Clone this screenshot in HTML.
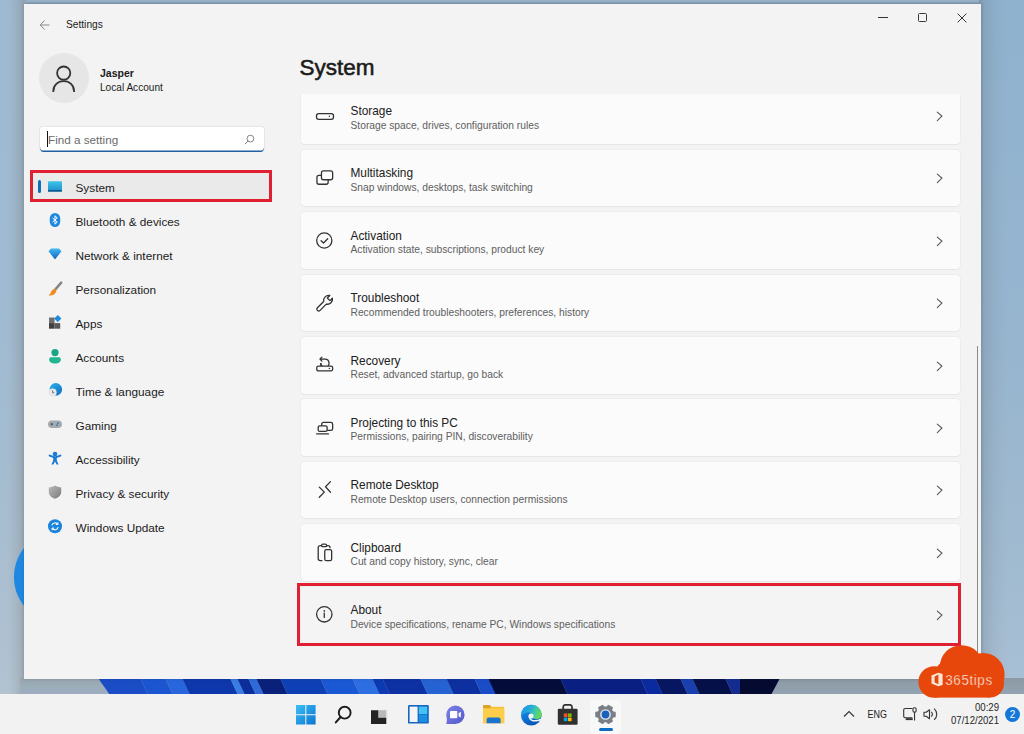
<!DOCTYPE html>
<html><head><meta charset="utf-8">
<style>
*{margin:0;padding:0;box-sizing:border-box}
html,body{width:1024px;height:734px;overflow:hidden;font-family:"Liberation Sans",sans-serif;background:#94b3cf}
.abs{position:absolute}
#desk{position:absolute;left:0;top:0;width:1024px;height:734px;background:linear-gradient(180deg,#7fa6c6 0%,#8eb0cc 50%,#a9bed2 100%)}
#win{position:absolute;left:24px;top:4px;width:957px;height:675px;background:#f3f3f3;overflow:hidden;box-shadow:0 0 3px rgba(40,60,80,0.25)}
.t{position:absolute;white-space:nowrap;color:#1b1b1b}
.nav{position:absolute;left:51.5px;font-size:11.8px;color:#1b1b1b;white-space:nowrap}
.card{position:absolute;left:277px;width:659px;height:56.5px;background:#fbfbfb;border-radius:4px;box-shadow:0 1px 0 #e6e6e6, 0 0 0 1px #ededed}
.ct{position:absolute;left:49.5px;top:16.5px;font-size:11.85px;color:#202020;white-space:nowrap}
.cs{position:absolute;left:49.5px;top:32px;font-size:10.25px;color:#606060;white-space:nowrap}
.chev{position:absolute;left:635px;top:23.5px}
.ic{position:absolute;left:14px;top:18.3px}
#task{position:absolute;left:0;top:694px;width:1024px;height:40px;background:#f2f2f2}
</style></head>
<body>
<div id="desk"></div>
<div class="abs" style="left:0;top:0;width:1024px;height:8px;background:linear-gradient(180deg,#97b2c8 0,#93aec4 2px,#7f95a6 4px,#8aa0b2 8px)"></div>
<div class="abs" style="left:0;top:0;width:26px;height:694px;background:linear-gradient(180deg,#9ebad2 0,#9fbad1 300px,#a7bdd0 520px,#b2c3d2 694px)"></div>
<div class="abs" style="left:0;top:0;width:26px;height:694px;background:linear-gradient(90deg,rgba(120,110,100,0) 0,rgba(120,110,100,0) 8px,rgba(120,115,110,0.12) 16px,rgba(120,115,110,0.3) 24px)"></div>
<div class="abs" style="left:979px;top:0;width:45px;height:694px;background:linear-gradient(180deg,#8fb2cf 0,#97b5cf 350px,#a0bad0 560px,#a9c0d5 694px)"></div>
<div class="abs" style="left:979px;top:0;width:45px;height:694px;background:linear-gradient(90deg,rgba(90,100,110,0.32) 0,rgba(100,110,120,0.2) 6px,rgba(110,115,120,0.08) 16px,rgba(110,115,120,0) 28px)"></div>
<div class="abs" style="left:14.4px;top:531.4px;width:91.2px;height:91.2px;border-radius:50%;background:#1f87e0"></div>
<!-- wallpaper strip -->
<svg class="abs" style="left:0;top:678px" width="1024" height="17" viewBox="0 0 1024 17">
<defs><linearGradient id="gstripL" x1="0" y1="0" x2="0" y2="1"><stop offset="0" stop-color="#98a4ad"/><stop offset="0.5" stop-color="#9aaeb9"/><stop offset="1" stop-color="#9fadc4"/></linearGradient><linearGradient id="gstripR" x1="0" y1="0" x2="0" y2="1"><stop offset="0" stop-color="#8d99a3"/><stop offset="1" stop-color="#94a4b4"/></linearGradient></defs><rect x="20" y="0" width="500" height="17" fill="url(#gstripL)"/><rect x="520" y="0" width="504" height="17" fill="url(#gstripR)"/>
<polygon points="98,0 140,0 148,17 110,17" fill="#1a4cc6"/>
<polygon points="140,0 165,0 173,17 148,17" fill="#1c55d0"/>
<polygon points="165,0 182,0 190,17 173,17" fill="#2766dc"/>
<polygon points="182,0 230,0 238,17 190,17" fill="#0d37aa"/>
<polygon points="230,0 237,0 245,17 238,17" fill="#3a7de4"/>
<polygon points="237,0 248,0 256,17 245,17" fill="#0b2e9c"/>
<polygon points="248,0 256,0 264,17 256,17" fill="#2f6ad8"/>
<polygon points="256,0 280,0 288,17 264,17" fill="#0a217c"/>
<polygon points="280,0 320,0 328,17 288,17" fill="#0f3fb4"/>
<polygon points="320,0 352,0 360,17 328,17" fill="#1a58d4"/>
<polygon points="352,0 372,0 380,17 360,17" fill="#2d6ee2"/>
<polygon points="372,0 382,0 390,17 380,17" fill="#0b39b2"/>
<polygon points="382,0 420,0 428,17 390,17" fill="#0d30a2"/>
<polygon points="420,0 446,0 454,17 428,17" fill="#2562d2"/>
<polygon points="446,0 474,0 482,17 454,17" fill="#0d30a0"/>
<polygon points="474,0 488,0 498,17 482,17" fill="#1a4cc8"/>
<polygon points="488,0 560,0 568,17 496,17" fill="#040c3a"/>
<polygon points="560,0 640,0 648,17 568,17" fill="#0a1f82"/>
<polygon points="640,0 655,0 663,17 648,17" fill="#0c2aa0"/>
<polygon points="655,0 680,0 688,17 663,17" fill="#061660"/>
<polygon points="680,0 692,0 700,17 688,17" fill="#1a40b0"/>
<polygon points="692,0 725,0 733,17 700,17" fill="#050f48"/>
<polygon points="725,0 740,0 748,17 733,17" fill="#142c90"/>
<polygon points="740,0 780,0 771,17 740,17" fill="#040a30"/>
</svg>
<div id="win">
  <!-- title bar -->
  <svg class="abs" style="left:14.5px;top:14.5px" width="12" height="12" viewBox="0 0 12 12"><path d="M10.5 6H1.5M5.6 1.4L1.2 6L5.6 10.6" fill="none" stroke="#8a8a8a" stroke-width="1"/></svg>
  <div class="t" style="left:42px;top:15px;font-size:10.2px;color:#1b1b1b">Settings</div>
  <!-- window controls -->
  <div class="abs" style="left:854px;top:12.5px;width:10px;height:1px;background:#333"></div>
  <div class="abs" style="left:893.8px;top:9px;width:9px;height:9px;border:1.2px solid #3a3a3a;border-radius:1.5px"></div>
  <svg class="abs" style="left:932.5px;top:8.5px" width="10" height="10" viewBox="0 0 10 10"><path d="M0.6 0.6L9.4 9.4M9.4 0.6L0.6 9.4" stroke="#333" stroke-width="1"/></svg>

  <!-- profile -->
  <div class="abs" style="left:14.5px;top:49px;width:50px;height:50px;border-radius:50%;background:#e6e6e6"></div>
  <svg class="abs" style="left:28px;top:60px" width="24" height="28" viewBox="0 0 24 28"><circle cx="11.7" cy="9.1" r="6.6" fill="none" stroke="#333" stroke-width="1.8"/><path d="M1.3 27.4C1.3 21 6 17.2 11.7 17.2S22.1 21 22.1 27.4" fill="none" stroke="#333" stroke-width="1.8" stroke-linecap="round"/></svg>
  <div class="t" style="left:76px;top:63.3px;font-size:10.5px;font-weight:700;color:#1b1b1b">Jasper</div>
  <div class="t" style="left:76px;top:78px;font-size:10.1px;color:#1b1b1b">Local Account</div>

  <!-- search -->
  <div class="abs" style="left:15px;top:121.5px;width:226px;height:26.5px;background:#fff;border-radius:4px;border:1px solid #e6e6e6;border-bottom:none;box-shadow:inset 0 -1.6px 0 #1d5f9f"></div>
  <div class="abs" style="left:23px;top:127px;width:1px;height:16px;background:#111"></div>
  <div class="t" style="left:24px;top:128.5px;font-size:11.7px;color:#6b6b6b">Find a setting</div>
  <svg class="abs" style="left:220px;top:129.5px" width="11" height="11" viewBox="0 0 11 11"><circle cx="6.4" cy="4.6" r="3.4" fill="none" stroke="#777" stroke-width="0.9"/><path d="M4 7.1L1.2 9.9" stroke="#777" stroke-width="1" stroke-linecap="round"/></svg>

  <!-- nav -->
  <div class="abs" style="left:8px;top:168px;width:238px;height:30px;background:#eaeaea;border-radius:4px"></div>
  <div class="abs" style="left:14px;top:176px;width:3px;height:13px;background:#0f6cbd;border-radius:2px"></div>
  <div class="abs" style="left:6px;top:166px;width:242px;height:31.5px;border:3px solid #e01f33"></div>


  <!-- nav icons -->
  <svg class="abs" style="left:23px;top:176px" width="16" height="14" viewBox="0 0 16 14"><defs><linearGradient id="gsys" x1="0" y1="0" x2="0" y2="1"><stop offset="0" stop-color="#3cc4e6"/><stop offset="1" stop-color="#1d8fcf"/></linearGradient></defs><rect x="1" y="1.2" width="14" height="10.2" rx="1" fill="url(#gsys)"/><rect x="1" y="10" width="14" height="1.6" fill="#10598c"/></svg>
  <svg class="abs" style="left:23px;top:208px" width="16" height="16" viewBox="0 0 16 16"><rect x="2.8" y="1" width="10.4" height="14" rx="5.2" fill="#1c86e3"/><path d="M5.5 5.9L10.3 10.1L8 12.2V3.8L10.3 5.9L5.5 10.1" fill="none" stroke="#fff" stroke-width="1" stroke-linejoin="round"/></svg>
  <svg class="abs" style="left:23px;top:243px" width="16" height="14" viewBox="0 0 16 14"><defs><linearGradient id="gnet" x1="0" y1="0" x2="0" y2="1"><stop offset="0" stop-color="#43b8f0"/><stop offset="1" stop-color="#0f62c0"/></linearGradient></defs><path d="M1.5 4.2L4 1.6H12L14.5 4.2L8 12.6Z" fill="url(#gnet)"/></svg>
  <svg class="abs" style="left:23px;top:277px" width="16" height="16" viewBox="0 0 16 16"><path d="M14.2 1.6L8.4 8.4" stroke="#858585" stroke-width="2.4" stroke-linecap="round"/><path d="M8.6 8.2C6.4 7.6 4.6 9.2 4 11.3C3.6 12.6 2.6 13.7 1.4 14.2C4 14.8 7.4 14 8.8 11.4C9.4 10.2 9.5 9 8.6 8.2Z" fill="#f08a1c"/></svg>
  <svg class="abs" style="left:23px;top:310px" width="16" height="16" viewBox="0 0 16 16"><rect x="2" y="3.5" width="5.6" height="5.6" fill="#6f6f6f"/><rect x="2" y="9.1" width="5.6" height="5.6" fill="#3f3f3f"/><rect x="7.6" y="9.1" width="5.6" height="5.6" fill="#5a5a5a"/><path d="M10.8 1L14.4 4.6L10.8 8.2L7.2 4.6Z" fill="#1d8be0"/></svg>
  <svg class="abs" style="left:23px;top:344px" width="16" height="16" viewBox="0 0 16 16"><circle cx="8" cy="4.6" r="3.6" fill="#17a585"/><path d="M2.2 11.4C2.2 9.8 3.2 9.2 4.6 9.2H11.4C12.8 9.2 13.8 9.8 13.8 11.4C13.8 14 11.2 15.4 8 15.4S2.2 14 2.2 11.4Z" fill="#1fb690"/></svg>
  <svg class="abs" style="left:23px;top:378px" width="16" height="16" viewBox="0 0 16 16"><defs><linearGradient id="gtime" x1="0" y1="0" x2="1" y2="1"><stop offset="0" stop-color="#2bb3e8"/><stop offset="1" stop-color="#136bc4"/></linearGradient></defs><circle cx="8.8" cy="7.4" r="6.3" fill="url(#gtime)"/><circle cx="5.6" cy="10.6" r="4" fill="#e8e8e8"/><path d="M5.6 8.4V10.8H7.2" fill="none" stroke="#555" stroke-width="0.8"/></svg>
  <svg class="abs" style="left:23px;top:412px" width="16" height="16" viewBox="0 0 16 16"><rect x="1" y="4.4" width="14" height="7.6" rx="3.8" fill="#a7a9ad"/><path d="M3.6 8.2h2.4M4.8 7v2.4" stroke="#4b4b4b" stroke-width="0.9"/><circle cx="11" cy="7.2" r="0.9" fill="#1d7fd6"/><circle cx="10" cy="9.2" r="0.9" fill="#1d7fd6"/></svg>
  <svg class="abs" style="left:23px;top:446px" width="16" height="16" viewBox="0 0 16 16"><circle cx="8" cy="4" r="2.3" fill="#1b7bd4"/><path d="M2.6 5.6L8 7.4L13.4 5.6" fill="none" stroke="#1b7bd4" stroke-width="2" stroke-linecap="round"/><path d="M6.2 7.2H9.8V10.4L11.6 14.6H9.6L8 11.6L6.4 14.6H4.4L6.2 10.4Z" fill="#1b7bd4"/></svg>
  <svg class="abs" style="left:23px;top:480px" width="16" height="16" viewBox="0 0 16 16"><defs><linearGradient id="gpriv" x1="0" y1="0" x2="1" y2="1"><stop offset="0" stop-color="#b9b9b9"/><stop offset="1" stop-color="#7b7b7b"/></linearGradient></defs><path d="M8 1.6C10 2.8 12 3.4 14.2 3.4V8C14.2 11.4 11.6 13.6 8 14.8C4.4 13.6 1.8 11.4 1.8 8V3.4C4 3.4 6 2.8 8 1.6Z" fill="url(#gpriv)"/></svg>
  <svg class="abs" style="left:23px;top:514px" width="16" height="16" viewBox="0 0 16 16"><circle cx="8" cy="8.3" r="7" fill="#1b84dc"/><path d="M4.8 7.4A3.4 3.4 0 0 1 10.8 6.2M11.2 9.2A3.4 3.4 0 0 1 5.2 10.4" fill="none" stroke="#fff" stroke-width="1.1"/><path d="M10.9 4.4V6.5H8.8M5.1 12.2V10.1H7.2" fill="none" stroke="#fff" stroke-width="1"/></svg>
  <div class="nav" style="top:177px">System</div>
  <div class="nav" style="top:211px">Bluetooth &amp; devices</div>
  <div class="nav" style="top:245px">Network &amp; internet</div>
  <div class="nav" style="top:279px">Personalization</div>
  <div class="nav" style="top:313px">Apps</div>
  <div class="nav" style="top:347px">Accounts</div>
  <div class="nav" style="top:381px">Time &amp; language</div>
  <div class="nav" style="top:415px">Gaming</div>
  <div class="nav" style="top:449px">Accessibility</div>
  <div class="nav" style="top:483px">Privacy &amp; security</div>
  <div class="nav" style="top:517px">Windows Update</div>

  <!-- heading -->
  <div class="t" style="left:275.5px;top:51px;font-size:22.5px;font-weight:400;color:#1b1b1b;-webkit-text-stroke:0.55px #1b1b1b">System</div>

  <!-- content cards container (clip at header) -->
  <div class="abs" style="left:0;top:90px;width:957px;height:585px;overflow:hidden">
    <div id="cards" class="abs" style="left:0;top:-90px;width:957px;height:675px">
<div class="card" style="top:83.50px;background:#fbfbfb"><svg class="ic" width="20" height="20" viewBox="0 0 20 20"><rect x="1.5" y="7.6" width="17" height="5.7" rx="2.2" fill="none" stroke="#333" stroke-width="1.3" stroke-linecap="round" stroke-linejoin="round"/><circle cx="14.4" cy="10.2" r="0.75" fill="#333"/></svg><div class="ct">Storage</div><div class="cs">Storage space, drives, configuration rules</div><svg class="chev" width="8" height="11" viewBox="0 0 8 11"><path d="M1.3 1.2L5.9 5.1L1.3 9.6" fill="none" stroke="#555" stroke-width="1.1" stroke-linecap="round"/></svg></div>
<div class="card" style="top:145.88px;background:#fbfbfb"><svg class="ic" width="20" height="20" viewBox="0 0 20 20"><rect x="6.45" y="2.85" width="11.2" height="8.9" rx="2" fill="none" stroke="#333" stroke-width="1.3" stroke-linecap="round" stroke-linejoin="round"/><path d="M6.45 7.35H3.95a2 2 0 0 0-2 2V14.25a2 2 0 0 0 2 2H11.15a2 2 0 0 0 2-2V11.75" fill="none" stroke="#333" stroke-width="1.3" stroke-linecap="round" stroke-linejoin="round"/></svg><div class="ct">Multitasking</div><div class="cs">Snap windows, desktops, task switching</div><svg class="chev" width="8" height="11" viewBox="0 0 8 11"><path d="M1.3 1.2L5.9 5.1L1.3 9.6" fill="none" stroke="#555" stroke-width="1.1" stroke-linecap="round"/></svg></div>
<div class="card" style="top:208.25px;background:#fbfbfb"><svg class="ic" width="20" height="20" viewBox="0 0 20 20"><circle cx="9.3" cy="9.5" r="7.6" fill="none" stroke="#333" stroke-width="1.3" stroke-linecap="round" stroke-linejoin="round"/><path d="M6.1 9.8L8.5 12L12.7 7.8" fill="none" stroke="#333" stroke-width="1.3" stroke-linecap="round" stroke-linejoin="round"/></svg><div class="ct">Activation</div><div class="cs">Activation state, subscriptions, product key</div><svg class="chev" width="8" height="11" viewBox="0 0 8 11"><path d="M1.3 1.2L5.9 5.1L1.3 9.6" fill="none" stroke="#555" stroke-width="1.1" stroke-linecap="round"/></svg></div>
<div class="card" style="top:270.62px;background:#fbfbfb"><svg class="ic" width="20" height="20" viewBox="0 0 20 20"><path d="M14.8 2.5A5.1 5.1 0 0 0 8.7 8.5L2.4 14.7A1.9 1.9 0 0 0 5.1 17.4L11.3 11.1A5.1 5.1 0 0 0 17.4 5.1L14.9 7.6L12.3 5Z" fill="none" stroke="#333" stroke-width="1.3" stroke-linecap="round" stroke-linejoin="round"/></svg><div class="ct">Troubleshoot</div><div class="cs">Recommended troubleshooters, preferences, history</div><svg class="chev" width="8" height="11" viewBox="0 0 8 11"><path d="M1.3 1.2L5.9 5.1L1.3 9.6" fill="none" stroke="#555" stroke-width="1.1" stroke-linecap="round"/></svg></div>
<div class="card" style="top:333.00px;background:#fbfbfb"><svg class="ic" width="20" height="20" viewBox="0 0 20 20"><path d="M9.9 4.1H4.9M6.9 2.1L4.9 4.1L6.9 6.1M9.9 4.1A4.1 4.1 0 1 1 5.9 9" fill="none" stroke="#333" stroke-width="1.3" stroke-linecap="round" stroke-linejoin="round"/><path d="M5.9 8.4V10.6" fill="none" stroke="#333" stroke-width="1.3" stroke-linecap="round" stroke-linejoin="round"/><rect x="1.75" y="11.05" width="15.9" height="4.9" rx="1.8" fill="#fbfbfb" stroke="#333" stroke-width="1.3"/><circle cx="14.4" cy="13.4" r="0.75" fill="#333"/></svg><div class="ct">Recovery</div><div class="cs">Reset, advanced startup, go back</div><svg class="chev" width="8" height="11" viewBox="0 0 8 11"><path d="M1.3 1.2L5.9 5.1L1.3 9.6" fill="none" stroke="#555" stroke-width="1.1" stroke-linecap="round"/></svg></div>
<div class="card" style="top:395.38px;background:#fbfbfb"><svg class="ic" width="20" height="20" viewBox="0 0 20 20"><rect x="6.7" y="4.35" width="10.95" height="8.1" rx="1.8" fill="none" stroke="#333" stroke-width="1.3" stroke-linecap="round" stroke-linejoin="round"/><rect x="3.2" y="7.85" width="8.95" height="5.6" rx="1.5" fill="#fbfbfb" stroke="#333" stroke-width="1.3"/><path d="M1.7 15.95H13.4" fill="none" stroke="#333" stroke-width="1.3" stroke-linecap="round" stroke-linejoin="round"/></svg><div class="ct">Projecting to this PC</div><div class="cs">Permissions, pairing PIN, discoverability</div><svg class="chev" width="8" height="11" viewBox="0 0 8 11"><path d="M1.3 1.2L5.9 5.1L1.3 9.6" fill="none" stroke="#555" stroke-width="1.1" stroke-linecap="round"/></svg></div>
<div class="card" style="top:457.75px;background:#fbfbfb"><svg class="ic" width="20" height="20" viewBox="0 0 20 20"><path d="M4.3 7.1L9.3 12.15L4.3 17.3" fill="none" stroke="#333" stroke-width="1.3" stroke-linecap="round" stroke-linejoin="round"/><path d="M15.5 1.6L10.5 6.8L15.5 12.2" fill="none" stroke="#333" stroke-width="1.3" stroke-linecap="round" stroke-linejoin="round"/></svg><div class="ct">Remote Desktop</div><div class="cs">Remote Desktop users, connection permissions</div><svg class="chev" width="8" height="11" viewBox="0 0 8 11"><path d="M1.3 1.2L5.9 5.1L1.3 9.6" fill="none" stroke="#555" stroke-width="1.1" stroke-linecap="round"/></svg></div>
<div class="card" style="top:520.12px;background:#fbfbfb"><svg class="ic" width="20" height="20" viewBox="0 0 20 20"><path d="M6.4 3.6H5.2a2 2 0 0 0-2 2V16.6a2 2 0 0 0 2 2H7" fill="none" stroke="#333" stroke-width="1.3" stroke-linecap="round" stroke-linejoin="round"/><path d="M6.6 3.4a1.3 1.3 0 0 1 1.3-1.2h2.4a1.3 1.3 0 0 1 1.3 1.2v.3a1 1 0 0 1-1 1H7.6a1 1 0 0 1-1-1z" fill="none" stroke="#333" stroke-width="1.3" stroke-linecap="round" stroke-linejoin="round"/><path d="M11.8 3.6h1.2a2 2 0 0 1 2 2v.1" fill="none" stroke="#333" stroke-width="1.3" stroke-linecap="round" stroke-linejoin="round"/><rect x="9.75" y="7.6" width="6.9" height="11" rx="1.6" fill="none" stroke="#333" stroke-width="1.3" stroke-linecap="round" stroke-linejoin="round"/></svg><div class="ct">Clipboard</div><div class="cs">Cut and copy history, sync, clear</div><svg class="chev" width="8" height="11" viewBox="0 0 8 11"><path d="M1.3 1.2L5.9 5.1L1.3 9.6" fill="none" stroke="#555" stroke-width="1.1" stroke-linecap="round"/></svg></div>
<div class="card" style="top:582.50px;background:#f4f4f4"><svg class="ic" width="20" height="20" viewBox="0 0 20 20"><circle cx="9.3" cy="9.3" r="7.7" fill="none" stroke="#333" stroke-width="1.3" stroke-linecap="round" stroke-linejoin="round"/><path d="M9.3 8.2V12.4" fill="none" stroke="#333" stroke-width="1.3" stroke-linecap="round" stroke-linejoin="round"/><circle cx="9.3" cy="5.9" r="0.85" fill="#333"/></svg><div class="ct">About</div><div class="cs">Device specifications, rename PC, Windows specifications</div><svg class="chev" width="8" height="11" viewBox="0 0 8 11"><path d="M1.3 1.2L5.9 5.1L1.3 9.6" fill="none" stroke="#555" stroke-width="1.1" stroke-linecap="round"/></svg></div>

    </div>
  </div>
  <div class="abs" style="left:273px;top:579px;width:664px;height:63px;border:3px solid #e01f33"></div>
  <!-- scrollbar -->
  <div class="abs" style="left:952.5px;top:342px;width:1.5px;height:320px;background:#8a8a8a"></div>
</div>

<!-- taskbar -->
<div id="task">
  <!-- start -->
  <svg class="abs" style="left:296px;top:11px" width="20" height="20" viewBox="0 0 20 20"><defs><linearGradient id="gst" x1="0" y1="0" x2="1" y2="1"><stop offset="0" stop-color="#3bc0f5"/><stop offset="1" stop-color="#0a74d2"/></linearGradient></defs><path d="M0 0H9.3V9.3H0ZM10.3 0H19.6V9.3H10.3ZM0 10.3H9.3V19.6H0ZM10.3 10.3H19.6V19.6H10.3Z" fill="url(#gst)"/></svg>
  <!-- search -->
  <svg class="abs" style="left:334px;top:11px" width="20" height="20" viewBox="0 0 20 20"><circle cx="10.7" cy="7.7" r="5.9" fill="none" stroke="#1c1c1c" stroke-width="1.9"/><path d="M6.6 12L1.8 17.4" stroke="#1c1c1c" stroke-width="2" stroke-linecap="round"/></svg>
  <!-- task view -->
  <svg class="abs" style="left:370px;top:15px" width="20" height="16" viewBox="0 0 20 16"><rect x="9" y="1" width="9" height="7" fill="#ececec"/><rect x="8.3" y="1.2" width="8" height="7.6" fill="#b9b9b9"/><path d="M1 1.2H8.3V8.8H16.3V15H1Z" fill="#232323"/></svg>
  <!-- widgets -->
  <svg class="abs" style="left:408px;top:11px" width="21" height="19" viewBox="0 0 21 19"><rect x="0" y="0" width="20.8" height="18.6" rx="1.2" fill="#1666c4"/><rect x="1.6" y="1.6" width="8" height="15.4" fill="#f4f4f6"/><rect x="10.8" y="1.6" width="8.4" height="7.4" fill="#44c3f2"/><rect x="10.8" y="9.6" width="8.4" height="7.4" fill="#1a90e2"/></svg>
  <!-- teams -->
  <svg class="abs" style="left:445px;top:11px" width="21" height="21" viewBox="0 0 21 21"><defs><linearGradient id="gtm" x1="0" y1="0" x2="1" y2="1"><stop offset="0" stop-color="#7f84ea"/><stop offset="1" stop-color="#5156c8"/></linearGradient></defs><path d="M1.2 9.8A9.2 9.2 0 1 1 10.4 19Q5.8 19 1.3 18.9Q2.6 15.4 1.2 9.8Z" fill="url(#gtm)"/><rect x="5" y="5.9" width="7.3" height="7.3" rx="0.8" fill="#fff"/><path d="M13.6 8.2L15.8 6.8V12.6L13.6 11.2Z" fill="#fff"/></svg>
  <!-- explorer -->
  <svg class="abs" style="left:483px;top:11px" width="22" height="19" viewBox="0 0 22 19"><path d="M0 1.2C0 0.5 0.5 0 1.2 0H6.6L8.4 1.8H20C20.7 1.8 21.2 2.3 21.2 3V18.2H0Z" fill="#f6c03a"/><path d="M0 1.2C0 0.5 0.5 0 1.2 0H6.6L8.4 1.8L6.6 3.4H0Z" fill="#dfa12b"/><rect x="0" y="3.4" width="21.2" height="14.8" fill="#fbcd48"/><path d="M3.6 14.4C3.6 13.4 4.2 12.4 5.4 12.4H15.8C17 12.4 17.6 13.4 17.6 14.4V18.2H3.6Z" fill="#1a73cf"/></svg>
  <!-- edge -->
  <svg class="abs" style="left:519.5px;top:9.5px" width="23" height="23" viewBox="0 0 23 23"><defs><linearGradient id="ged1" x1="0" y1="0" x2="0.6" y2="1"><stop offset="0" stop-color="#1c9ee8"/><stop offset="0.55" stop-color="#0f74d4"/><stop offset="1" stop-color="#0b55b0"/></linearGradient><linearGradient id="ged2" x1="0" y1="0" x2="1" y2="0.3"><stop offset="0" stop-color="#1c98e6"/><stop offset="0.45" stop-color="#22a8de"/><stop offset="0.75" stop-color="#3fcaa8"/><stop offset="1" stop-color="#60d85c"/></linearGradient></defs>
  <circle cx="11.3" cy="11.1" r="10.4" fill="url(#ged1)"/>
  <path d="M1 11.4A10.3 10.3 0 0 1 21.7 10.8C21.7 13.6 19.4 15.2 16.6 15.2C13.8 15.2 12.2 13.8 12.2 12C12.2 10.2 10.8 8.6 8.6 8.6C5 8.6 1.8 10.4 1 12.6Z" fill="url(#ged2)"/>
  <path d="M21.9 12.2C21.4 15 19.2 16.4 16.6 16.2L22.5 16.4V12Z" fill="#f0f0f0"/>
  <path d="M9.4 13.2C9.6 15.6 12.6 17.2 16.4 16.8C18.4 16.6 19.8 16 20.9 15.2" fill="none" stroke="#eaf4fb" stroke-width="1.5"/>
  <circle cx="11" cy="12" r="2.6" fill="#eef6fb"/>
  </svg>
  <!-- store -->
  <svg class="abs" style="left:557px;top:10px" width="21" height="22" viewBox="0 0 21 22"><path d="M6.2 5V3C6.2 1.6 7 0.8 8.4 0.8H12.8C14.2 0.8 15 1.6 15 3V5" fill="none" stroke="#2f2f2f" stroke-width="1.7"/><rect x="0.8" y="4.8" width="19.8" height="16" rx="1.2" fill="#303030"/><rect x="6.8" y="9.4" width="3.6" height="3.6" fill="#f25022"/><rect x="11" y="9.4" width="3.6" height="3.6" fill="#7fba00"/><rect x="6.8" y="13.6" width="3.6" height="3.6" fill="#00a4ef"/><rect x="11" y="13.6" width="3.6" height="3.6" fill="#ffb900"/></svg>
  <!-- settings active -->
  <div class="abs" style="left:590px;top:6px;width:31px;height:34px;background:#f8f8f8;border-radius:4px"></div>
  <svg class="abs" style="left:595px;top:9.6px" width="21" height="21" viewBox="0 0 21 21"><path d="M17.64 7.90L19.95 8.32L19.95 12.68L17.64 13.10L16.32 15.39L17.12 17.59L13.34 19.78L11.82 17.98L9.18 17.98L7.66 19.78L3.88 17.59L4.68 15.39L3.36 13.10L1.05 12.68L1.05 8.32L3.36 7.90L4.68 5.61L3.88 3.41L7.66 1.22L9.18 3.02L11.82 3.02L13.34 1.22L17.12 3.41L16.32 5.61Z" fill="#7a7f86" stroke="#7a7f86" stroke-width="1.6" stroke-linejoin="round" transform="translate(0,0.5) scale(1,0.95)"/><circle cx="10.5" cy="10.5" r="5.3" fill="#e3ebf4"/><circle cx="10.5" cy="10.5" r="3.9" fill="#1b60b9"/></svg>
  <div class="abs" style="left:599px;top:34px;width:13.5px;height:3px;background:#0f6cc4;border-radius:2px"></div>
  <!-- tray -->
  <svg class="abs" style="left:843px;top:16px" width="12" height="8" viewBox="0 0 12 8"><path d="M1 6.5L6 1.5L11 6.5" fill="none" stroke="#333" stroke-width="1.1"/></svg>
  <div class="abs" style="left:867.5px;top:14.5px;font-size:9px;color:#1e1e1e;white-space:nowrap;transform:scaleY(1.15);transform-origin:0 0">ENG</div>
  <svg class="abs" style="left:902px;top:12px" width="17" height="16" viewBox="0 0 17 16"><path d="M10.4 2.5H3.2A1.5 1.5 0 0 0 1.7 4V10.3A1.5 1.5 0 0 0 3.2 11.8H10.4" fill="none" stroke="#333" stroke-width="1.1"/><rect x="3.7" y="12.2" width="7" height="1.9" fill="#333"/><path d="M12.55 6V14.4" stroke="#333" stroke-width="1.1"/><rect x="10.95" y="1.7" width="3.2" height="4.4" rx="1.4" fill="#f2f2f2" stroke="#333" stroke-width="1.1"/></svg>
  <svg class="abs" style="left:923px;top:14px" width="16" height="13" viewBox="0 0 16 13"><path d="M1 4.2H3.2L6.5 1.8V10.8L3.2 8.3H1Z" fill="none" stroke="#333" stroke-width="1.1" stroke-linejoin="round"/><path d="M8.2 3.85A2.9 2.9 0 0 1 8.2 8.55M11.1 0.6A7.3 7.3 0 0 1 11.1 11.9" fill="none" stroke="#333" stroke-width="1.1"/><path d="M9.6 2.2A5 5 0 0 1 9.6 10.2" fill="none" stroke="#333" stroke-width="0" /></svg>
  <div class="abs" style="left:949px;top:7.6px;width:50px;text-align:right;font-size:9.6px;line-height:10.6px;color:#1e1e1e;transform:scaleY(1.15);transform-origin:0 0">00:29<br>07/12/2021</div>
  <div class="abs" style="left:1005px;top:12.5px;width:15px;height:15px;border-radius:50%;background:#1577d8;color:#fff;font-size:10px;line-height:15px;text-align:center">2</div>
</div>
<!-- 365tips cloud -->
<svg class="abs" style="left:910px;top:640px" width="100" height="60" viewBox="910 640 100 60">
<g fill="#e8470c"><circle cx="934.2" cy="682" r="15.8"/><circle cx="961.5" cy="667" r="21.8"/><circle cx="983" cy="674.5" r="21.6"/><rect x="934" y="668" width="56" height="29.6"/><circle cx="945" cy="671" r="9"/><circle cx="990" cy="683.6" r="14"/></g>
<path d="M931.5 675.4L938.2 672.8L942.6 674V685L938.2 686.2L931.5 683.6ZM934.6 676.4V682.6L938.4 684.2V674.6Z" fill="#fde7d4" fill-rule="evenodd"/>
<text x="945.3" y="684.8" font-family="Liberation Sans" font-size="13.4" fill="#fff2e6" stroke="#e8470c" stroke-width="0.3" letter-spacing="0.6" transform="translate(0,-68.5) scale(1,1.1)">365tips</text>
</svg>
</body></html>
